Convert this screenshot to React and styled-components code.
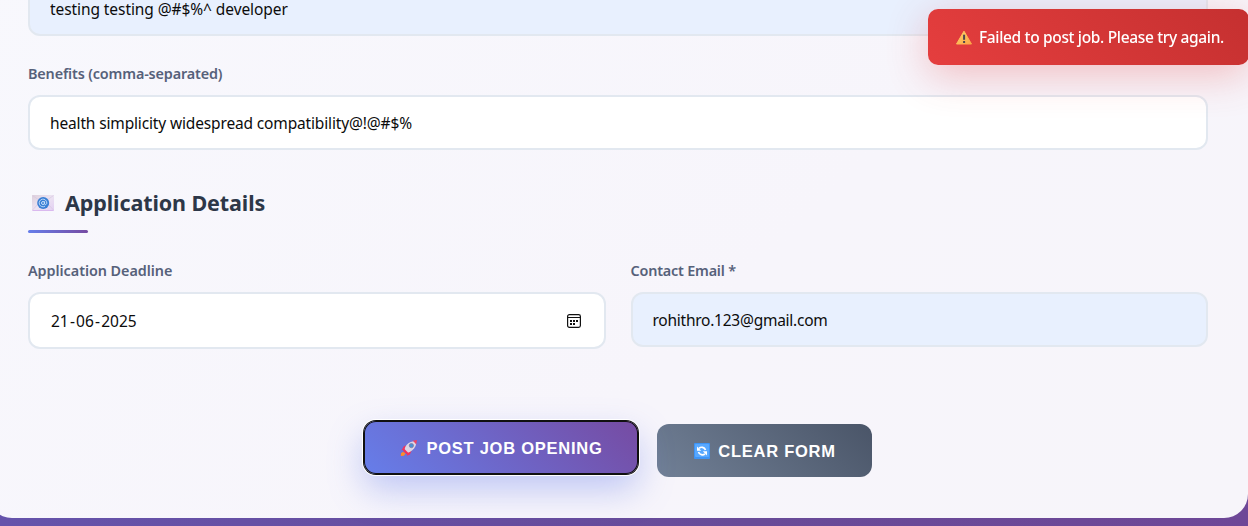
import React from "react";
import styled, { createGlobalStyle } from "styled-components";

const GlobalStyle = createGlobalStyle`
  * { box-sizing: border-box; }
  html, body { margin: 0; overflow: hidden; }
  body { font-family: "Noto Sans", "Open Sans", sans-serif; }
`;

const Page = styled.div`
  height: 526px;
  overflow: hidden;
  background: linear-gradient(90deg, #6553ab, #684a98 60%, #6e4797);
`;

const Card = styled.form`
  width: 1260px;
  height: 578px;
  margin: -60px 0 0 -12px;
  padding: 41px 40px;
  border-radius: 24px;
  background: linear-gradient(135deg, #f8f8fd, #f7f5fb 60%, #f7f5fa);
  display: flex;
  flex-direction: column;
`;

const Input = styled.input`
  display: block;
  width: 100%;
  height: 55px;
  padding: 0 20px;
  border: 2px solid #e2e8f0;
  border-radius: 12px;
  outline: none;
  background: ${(p) => (p.$filled ? "#e8f0fe" : "#fff")};
  color: #0c0c0c;
  font: 400 15.5px "Noto Sans", sans-serif;
  letter-spacing: ${(p) => p.$spacing || "0"};
`;

const DateField = styled.div`
  height: 57px;
  padding: 0 23px 0 21px;
  border: 2px solid #e2e8f0;
  border-radius: 12px;
  background: #fff;
  color: #0c0c0c;
  font-size: 15.5px;
  display: flex;
  align-items: center;
  justify-content: space-between;
`;

const DateParts = styled.span`
  display: flex;
  gap: 1.2px;
`;

const Label = styled.label`
  display: block;
  height: 22px;
  line-height: 22px;
  color: #56617a;
  font-size: 14.4px;
  font-weight: 600;
  letter-spacing: ${(p) => p.$spacing || "0"};
`;

const Field = styled.div`
  flex: 1;
  display: flex;
  flex-direction: column;
  gap: 10px;
`;

const BenefitsField = styled(Field)`
  flex: none;
  margin-top: 27px;
`;

const SectionTitle = styled.h3`
  margin: 38px 0 0;
  height: 45px;
  color: #2d3748;
  font-size: 21.5px;
  font-weight: 700;
  line-height: 30px;
  display: flex;
  gap: 9px;
  padding-left: 3px;
  letter-spacing: -0.1px;
  svg { margin-top: 3px; }
`;

const Underline = styled.div`
  width: 60px;
  height: 3px;
  margin-top: -3px;
  border-radius: 2px;
  background: linear-gradient(90deg, #667eea, #764ba2);
`;

const Row = styled.div`
  display: flex;
  gap: 25px;
  margin-top: 27px;
`;

const Actions = styled.div`
  display: flex;
  justify-content: center;
  gap: 19px;
  margin-top: 75px;
`;

const Button = styled.button`
  width: ${(p) => p.$width};
  height: 53px;
  padding: 1px 0 0 1px;
  border: 0;
  border-radius: 12px;
  color: #fff;
  background: linear-gradient(45deg, #718096, #4a5568);
  font: 700 16.5px "Liberation Sans", sans-serif;
  letter-spacing: ${(p) => p.$spacing};
  display: flex;
  align-items: center;
  justify-content: center;
  gap: 8px;
`;

const PrimaryButton = styled(Button)`
  background: linear-gradient(45deg, #667eea, #764ba2);
  transform: translateY(-3px);
  box-shadow: inset 0 0 0 1px #101010, 0 0 0 1px #101010, 0 0 0 2px #fff,
    0 15px 35px rgba(102, 126, 234, 0.4);
`;

const Toast = styled.div`
  position: fixed;
  top: 9px;
  left: 928px;
  width: 321px;
  height: 56px;
  padding-left: 27px;
  border-radius: 10px;
  background: linear-gradient(45deg, #e53e3e, #c53030);
  box-shadow: 0 10px 40px rgba(229, 62, 62, 0.3);
  color: #fff;
  font-size: 15.5px;
  font-weight: 500;
  letter-spacing: -0.34px;
  white-space: nowrap;
  display: flex;
  align-items: center;
  gap: 6px;
`;

const EmailIcon = () => (
  <svg width="25" height="24" viewBox="0 0 25 24">
    <defs>
      <linearGradient id="paper" x1="0" x2="1" y1="0" y2="1">
        <stop offset="0" stopColor="#ddd0dc" />
        <stop offset="0.5" stopColor="#ece3f2" />
        <stop offset="1" stopColor="#e2cff3" />
      </linearGradient>
    </defs>
    <rect x="1" y="4" width="22" height="16" rx="0.8" fill="url(#paper)" />
    <path d="M1.5 4.5 12 12 22.5 4.5M1.5 19 9 11M22.5 19 15 11" stroke="#d6c6df" strokeWidth="0.7" fill="none" />
    <path d="M1.5 19.5h21" stroke="#dab9ef" />
    <circle cx="12.2" cy="12" r="6" fill="#397fd5" />
    <circle cx="12" cy="12" r="1.5" stroke="#c9e0fa" fill="none" />
    <path d="M13.6 10.2v2.6c0 1.5 2.2.9 2.2-.8a3.8 3.8 0 1 0-1.8 3.2" stroke="#c9e0fa" strokeWidth="0.9" fill="none" />
  </svg>
);

const WarningIcon = () => (
  <svg width="18" height="18" viewBox="0 0 18 18">
    <defs>
      <linearGradient id="amber" x1="0" x2="1" y1="0" y2="1">
        <stop offset="0" stopColor="#ffd36a" />
        <stop offset="1" stopColor="#fba445" />
      </linearGradient>
    </defs>
    <path d="M9 3.2 16.5 16H1.5Z" fill="url(#amber)" stroke="url(#amber)" strokeWidth="1" strokeLinejoin="round" />
    <path d="M9.1 6.7v5.1" stroke="#4b4650" strokeWidth="2" />
    <path d="M9.1 13v2" stroke="#4b4650" strokeWidth="2" />
  </svg>
);

const RocketIcon = () => (
  <svg width="18" height="18" viewBox="0 0 18 18">
    <path d="M6 6.5 3.8 7.3 1.5 11.2l4-.6ZM11.500 12l-1.800 3.700L6.800 16.800l.6-4Z" fill="#ee3560" />
    <path d="M3 12.700 1 14.300.8 17l3-.2 1.800-2.200Z" fill="#ff8b2a" />
    <path d="M13.500 2.200C9.500 2.800 6.500 5 5.200 8.300L4.200 11.500 6.700 14.200 9.800 12.900C13.500 11 15.800 8 16.200 4.500Z" fill="#dcd5e4" />
    <path d="M12.500 1.700 17 1 16.200 5.500C15.200 4 14.200 2.800 12.500 1.700Z" fill="#f04360" />
    <path d="m4.200 9.800 4 4-1.600 1.400-3.600-3.400Z" fill="#ef315e" />
    <circle cx="11.400" cy="6.600" r="2.100" fill="#4793d6" stroke="#8177a2" strokeWidth="0.800" />
  </svg>
);

const RefreshIcon = () => (
  <svg width="16" height="16" viewBox="0 0 16 16">
    <rect width="16" height="16" rx="1" fill="#3d94f6" />
    <rect x="1" y="1" width="14" height="13" rx="1" fill="#58a8ff" />
    <path d="M5 5.300C7 3.500 10.500 4 11.500 7M11 10.800C9 12.500 5.500 12 4.500 9" stroke="#fff" strokeWidth="1.700" fill="none" />
    <path d="M3 3.500v4.300h4.200ZM13 12.500V8.200H8.800Z" fill="#fff" />
  </svg>
);

const CalendarIcon = () => (
  <svg width="14" height="14" viewBox="0 0 14 14">
    <rect x="0.600" y="0.600" width="12.800" height="12.800" rx="1.800" fill="none" stroke="#111" strokeWidth="1.200" />
    <path d="M1 3.500h12" stroke="#111" />
    <path d="M6 6h2v2H6zM9 6h2v2H9zM3 6h2v2H3zM3 9h2v2H3zM6 9h2v2H6z" fill="#111" />
  </svg>
);

export default function App() {
  return (
    <Page>
      <GlobalStyle />
      <Card>
        <Input $filled $spacing="-0.08px" readOnly value="testing testing @#$%^ developer" aria-label="Requirements" />
        <BenefitsField>
          <Label $spacing="-0.15px">Benefits (comma-separated)</Label>
          <Input $spacing="-0.15px" readOnly value="health simplicity widespread compatibility@!@#$%" />
        </BenefitsField>
        <SectionTitle>
          <EmailIcon />
          <span>Application Details</span>
        </SectionTitle>
        <Underline />
        <Row>
          <Field>
            <Label $spacing="-0.05px">Application Deadline</Label>
            <DateField>
              <DateParts>
                <span>21</span><span>-</span><span>06</span><span>-</span><span>2025</span>
              </DateParts>
              <CalendarIcon />
            </DateField>
          </Field>
          <Field>
            <Label $spacing="-0.2px">Contact Email *</Label>
            <Input $filled $spacing="-0.25px" readOnly value="rohithro.123@gmail.com" />
          </Field>
        </Row>
        <Actions>
          <PrimaryButton type="button" $width="274px" $spacing="0.75px">
            <RocketIcon />
            <span>POST JOB OPENING</span>
          </PrimaryButton>
          <Button type="button" $width="215px" $spacing="0.75px">
            <RefreshIcon />
            <span>CLEAR FORM</span>
          </Button>
        </Actions>
      </Card>
      <Toast>
        <WarningIcon />
        <span>Failed to post job. Please try again.</span>
      </Toast>
    </Page>
  );
}
